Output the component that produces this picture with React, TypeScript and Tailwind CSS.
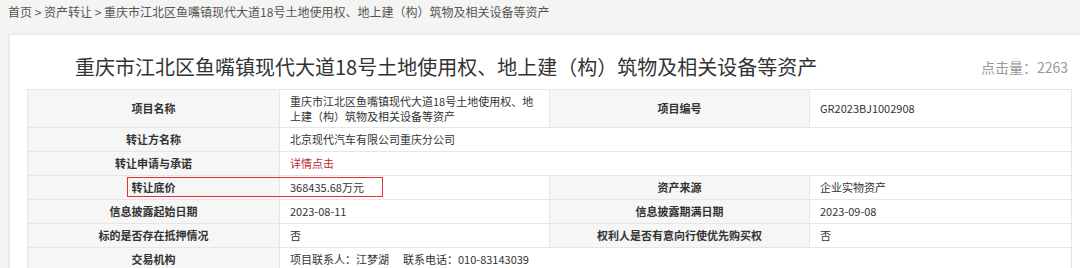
const rows: { cells: { text: React.ReactNode; label?: boolean; span?: number }[]; tall?: boolean }[] = [
  {
    tall: true,
    cells: [
      { text: "项目名称", label: true },
      { text: "重庆市江北区鱼嘴镇现代大道18号土地使用权、地上建（构）筑物及相关设备等资产" },
      { text: "项目编号", label: true },
      { text: "GR2023BJ1002908" },
    ],
  },
  {
    cells: [
      { text: "转让方名称", label: true },
      { text: "北京现代汽车有限公司重庆分公司", span: 3 },
    ],
  },
  {
    cells: [
      { text: "转让申请与承诺", label: true },
      { text: <span className="text-[#c0282d]">详情点击</span>, span: 3 },
    ],
  },
  {
    cells: [
      { text: "转让底价", label: true },
      { text: "368435.68万元" },
      { text: "资产来源", label: true },
      { text: "企业实物资产" },
    ],
  },
  {
    cells: [
      { text: "信息披露起始日期", label: true },
      { text: "2023-08-11" },
      { text: "信息披露期满日期", label: true },
      { text: "2023-09-08" },
    ],
  },
  {
    cells: [
      { text: "标的是否存在抵押情况", label: true },
      { text: "否" },
      { text: "权利人是否有意向行使优先购买权", label: true },
      { text: "否" },
    ],
  },
  {
    cells: [
      { text: "交易机构", label: true },
      {
        text: (
          <>
            项目联系人：江梦湖<span className="inline-block w-[14px]" />联系电话：010-83143039
          </>
        ),
        span: 3,
      },
    ],
  },
];

export default function App() {
  return (
    <div
      className="h-[268px] w-[1080px] overflow-hidden bg-[#f4f4f2] text-[#333]"
      style={{ fontFamily: '"Noto Sans CJK SC", "Noto Sans", sans-serif' }}
    >
      <div className="pl-2 pt-[3px] text-[12px] leading-[18px] text-[#555]">
        首页 &gt; 资产转让 &gt; 重庆市江北区鱼嘴镇现代大道18号土地使用权、地上建（构）筑物及相关设备等资产
      </div>

      <div className="ml-2 mt-3 w-[1100px] border-2 border-[#ebebeb] bg-white pl-[17px] pt-[18px]">
        <div className="mb-2 flex h-[28px] w-[1044px] items-center justify-between">
          <h1 className="pl-[48px] text-[20px] font-normal leading-[28px] text-[#333]">
            重庆市江北区鱼嘴镇现代大道18号土地使用权、地上建（构）筑物及相关设备等资产
          </h1>
          <span className="pr-[3px] text-[14px] text-[#999]">点击量：2263</span>
        </div>

        <div className="relative w-[1044px]">
          <table className="w-[1044px] table-fixed border-collapse text-[11px]">
            <colgroup>
              <col className="w-[252px]" />
              <col className="w-[270px]" />
              <col className="w-[260px]" />
              <col className="w-[262px]" />
            </colgroup>
            <tbody>
              {rows.map((row, i) => (
                <tr key={i} className={row.tall ? "h-[38px]" : "h-[24px]"}>
                  {row.cells.map((c, j) =>
                    c.label ? (
                      <td
                        key={j}
                        className="border border-[#e6e6e6] bg-[#f6f6f6] text-center font-bold leading-[15px] text-[#333]"
                      >
                        {c.text}
                      </td>
                    ) : (
                      <td
                        key={j}
                        colSpan={c.span}
                        className="border border-[#e6e6e6] px-[10px] leading-[15px] text-[#333]"
                      >
                        {c.text}
                      </td>
                    )
                  )}
                </tr>
              ))}
            </tbody>
          </table>

          {/* highlight box around the reserve price row */}
          <div className="pointer-events-none absolute left-[100px] top-[88px] h-[20px] w-[256px] border-[1.5px] border-[#e2323c]" />
        </div>
      </div>
    </div>
  );
}
